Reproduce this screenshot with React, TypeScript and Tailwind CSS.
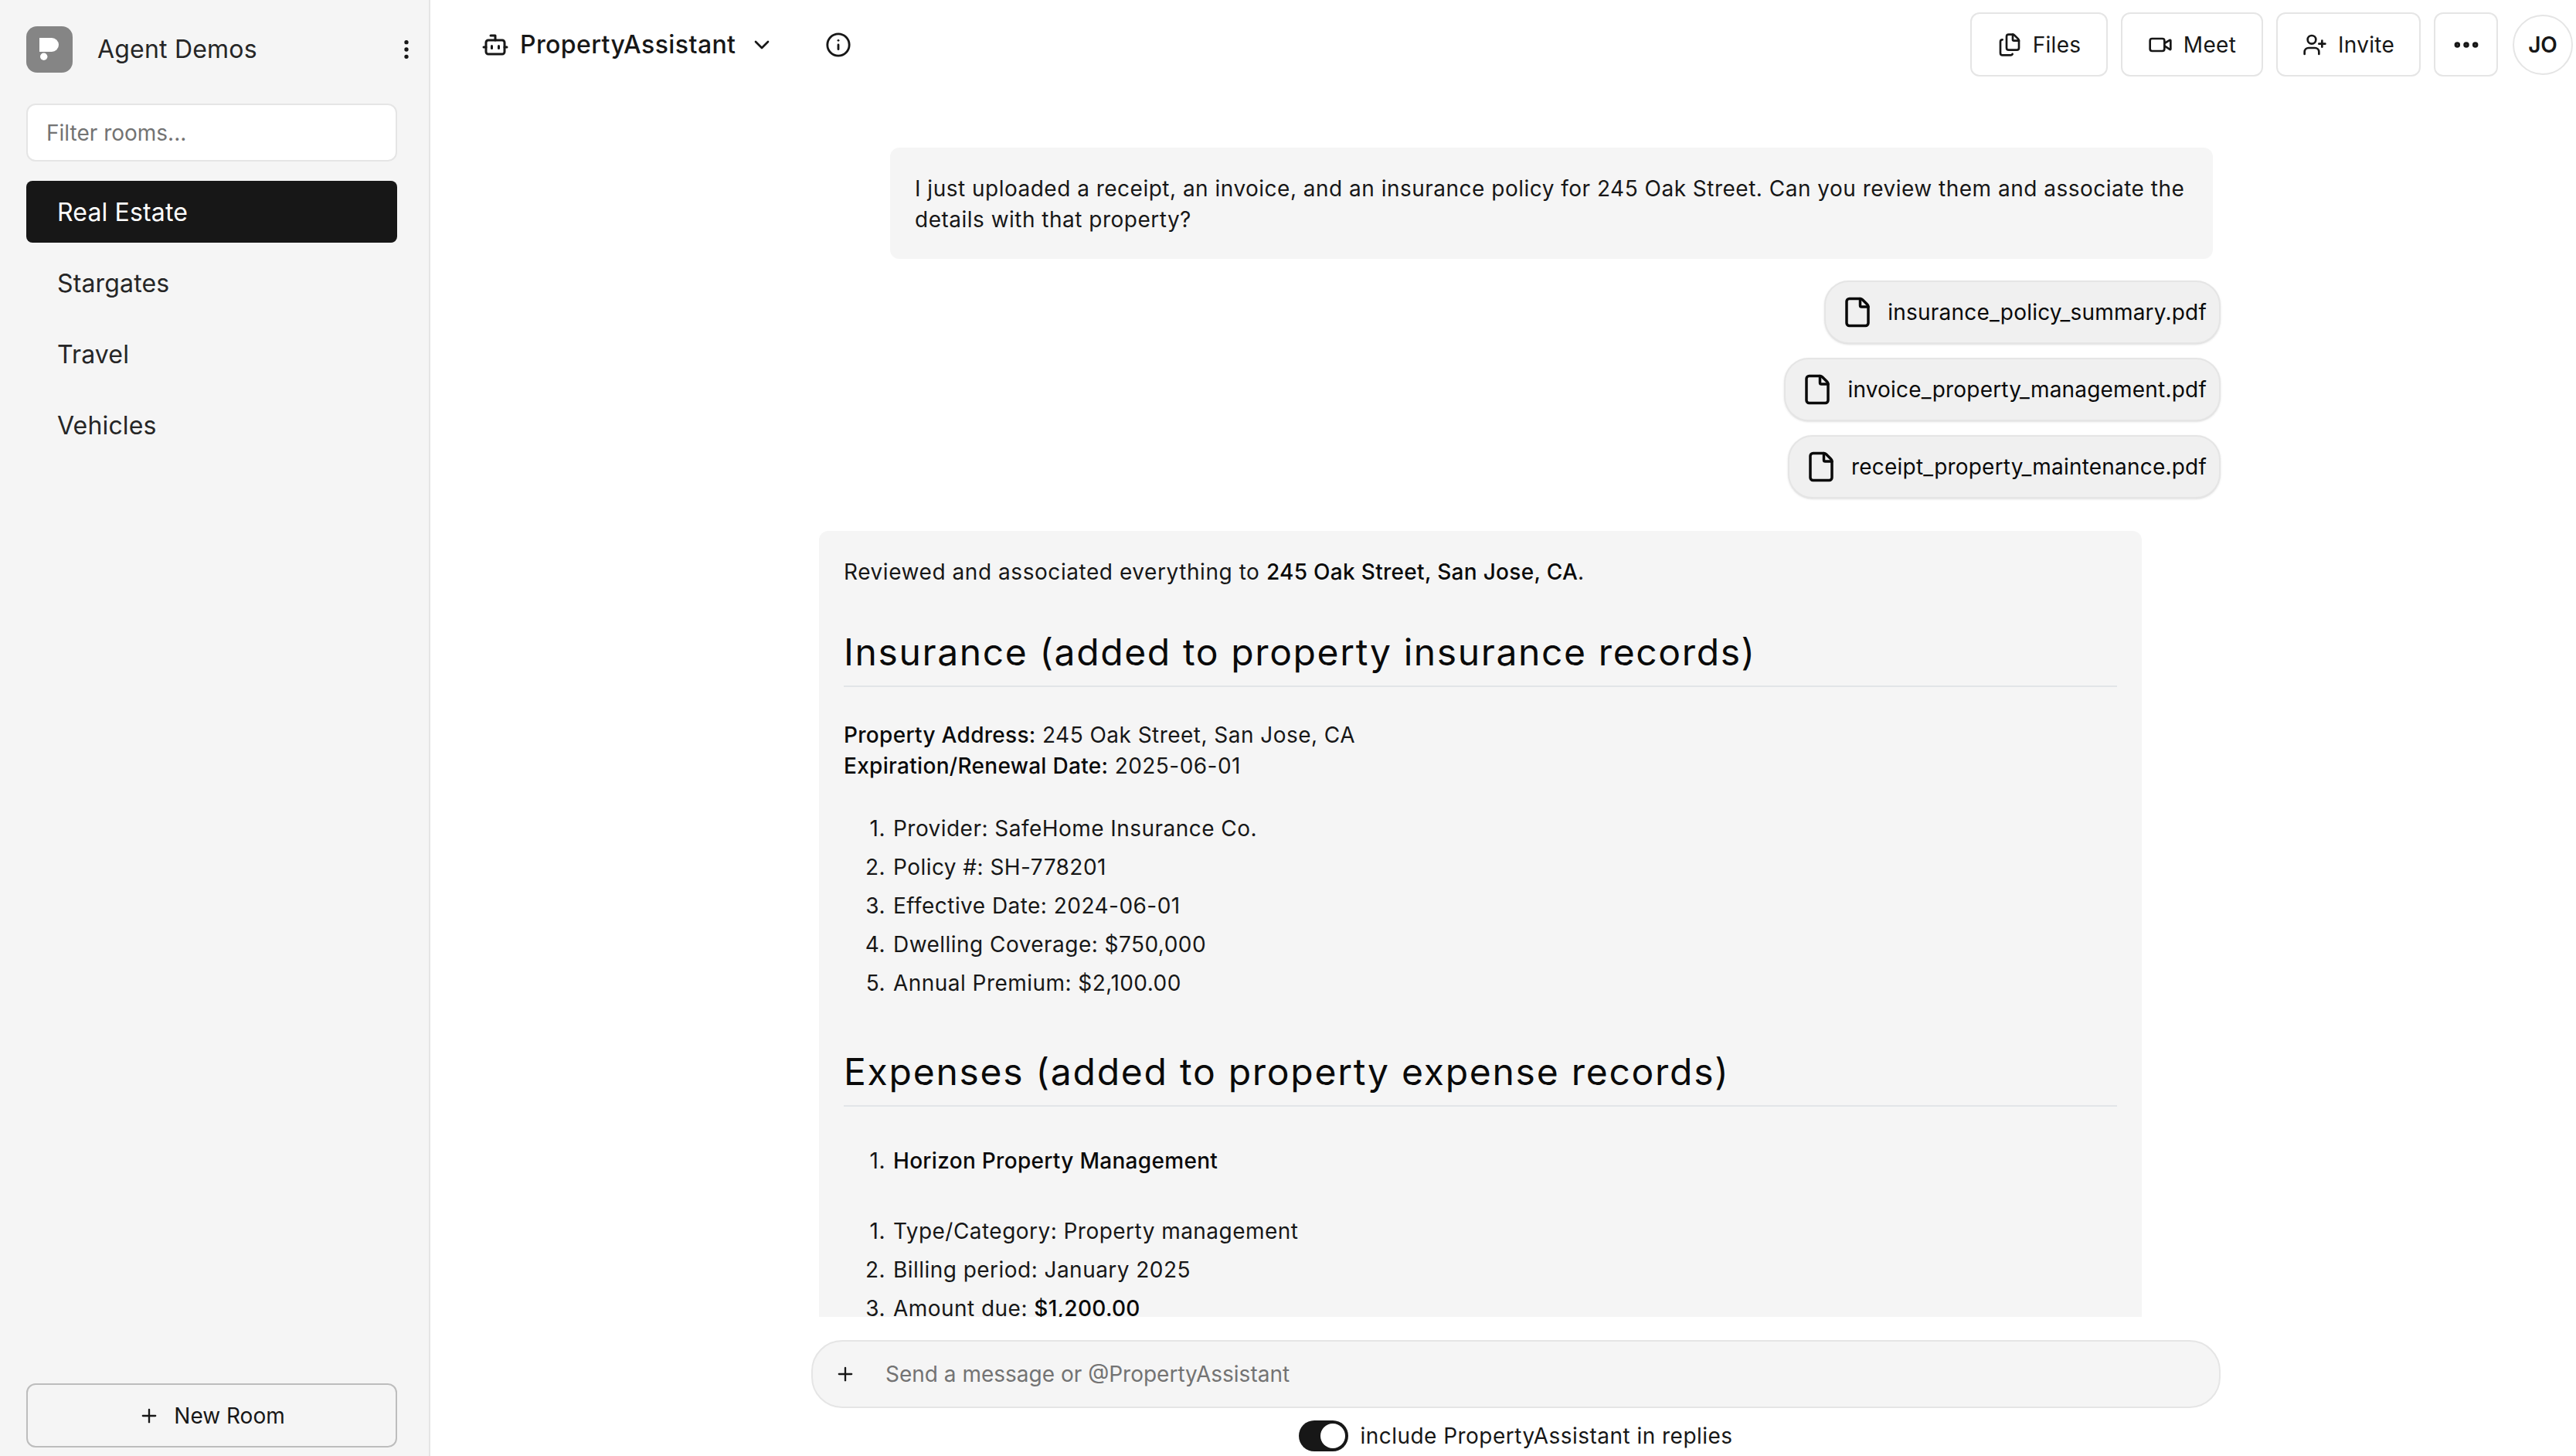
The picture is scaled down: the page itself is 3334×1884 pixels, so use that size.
import { Bot, ChevronDown, Info, Files, Video, UserPlus, Ellipsis, EllipsisVertical, File, Plus } from "lucide-react";

function Logo() {
  return (
    <svg viewBox="0 0 60 60" className="w-[60px] h-[60px] shrink-0">
      <rect width="60" height="60" rx="14" fill="#858585" />
      <path d="M17 15H33a9 9 0 0 1 0 18H17z" fill="#fff" />
      <circle cx="22.7" cy="39.3" r="4.7" fill="#fff" />
    </svg>
  );
}

function HeaderButton({ icon, label, className }: { icon: React.ReactNode; label: string; className: string }) {
  return (
    <button className={`h-[83px] flex items-center justify-center gap-[14px] border-2 border-[#e5e5e5] rounded-[12px] bg-white text-[28px] tracking-[0.3px] text-[#171717] ${className}`}>
      {icon}
      {label}
    </button>
  );
}

function Chip({ name }: { name: string }) {
  return (
    <div className="h-[82px] pl-[20px] pr-[16px] flex items-center gap-[18px] bg-[#f0f0f0] border-2 border-[#e5e5e5] rounded-[32px] shadow-sm text-[28px] tracking-[0.2px] text-[#0a0a0a]">
      <File size={42} strokeWidth={2} />
      {name}
    </div>
  );
}

function Item({ n, children }: { n: number; children: React.ReactNode }) {
  return (
    <li className="flex h-[40px] leading-[40px] mb-[10px]">
      <span className="w-[64px] shrink-0 text-right pr-[10px]">{n}.</span>
      <span>{children}</span>
    </li>
  );
}

function Heading({ children, className }: { children: React.ReactNode; className: string }) {
  return (
    <h2 className={`text-[48px] leading-[60px] font-normal text-[#0a0a0a] pb-[13px] border-b-2 border-[#e2e5e8] ${className}`}>
      {children}
    </h2>
  );
}

function B({ children }: { children: React.ReactNode }) {
  return <strong className="font-medium tracking-[0.3px] text-[#0a0a0a]">{children}</strong>;
}

export default function App() {
  return (
    <div className="flex h-screen w-full overflow-hidden bg-white text-[#171717] font-['Inter',sans-serif]">
      <aside className="w-[557px] shrink-0 flex flex-col bg-[#f5f5f5] border-r-2 border-[#e5e5e5] pl-[34px] pr-[41px] pt-[34px] pb-[11px]">
        <div className="flex items-center h-[60px]">
          <Logo />
          <span className="ml-[32px] text-[32px] tracking-[0.2px] text-[#262626] flex-1">Agent Demos</span>
          <EllipsisVertical size={32} className="mr-[-28px] text-[#171717]" />
        </div>
        <input
          placeholder="Filter rooms..."
          className="mt-[40px] h-[75px] w-full rounded-[12px] border-2 border-[#e5e5e5] bg-white px-[24px] text-[28px] placeholder:text-[#737373] outline-none"
        />
        <nav className="mt-[25px] flex flex-col gap-[12px] text-[32px] tracking-[0.15px]">
          <div className="h-[80px] flex items-center px-[40px] pt-[2px] rounded-[8px] bg-[#171717] text-white">Real Estate</div>
          <div className="h-[80px] flex items-center px-[40px] pt-[2px] text-[#262626]">Stargates</div>
          <div className="h-[80px] flex items-center px-[40px] pt-[2px] text-[#262626]">Travel</div>
          <div className="h-[80px] flex items-center px-[40px] pt-[2px] text-[#262626]">Vehicles</div>
        </nav>
        <button className="mt-auto h-[83px] flex items-center justify-center gap-[18px] rounded-[12px] border-2 border-[#bdbdbd] text-[28px] text-[#171717]">
          <Plus size={28} strokeWidth={2} />
          New Room
        </button>
      </aside>

      <main className="flex-1 min-w-0 flex flex-col">
        <header className="h-[99px] shrink-0 flex items-start pt-[16px] pl-[66px] pr-[4px]">
          <div className="h-[83px] flex items-center flex-1">
            <Bot size={36} strokeWidth={2} className="mr-[14px]" />
            <span className="text-[32px] font-medium tracking-[0.4px] text-[#171717]">PropertyAssistant</span>
            <ChevronDown size={32} strokeWidth={2} className="ml-[18px]" />
            <Info size={34} strokeWidth={2} className="ml-[66px]" />
          </div>
          <div className="flex items-center gap-[17px]">
            <HeaderButton className="w-[178px]" icon={<Files size={32} strokeWidth={2} />} label="Files" />
            <HeaderButton className="w-[184px]" icon={<Video size={32} strokeWidth={2} />} label="Meet" />
            <HeaderButton className="w-[187px]" icon={<UserPlus size={32} strokeWidth={2} />} label="Invite" />
            <button className="h-[83px] w-[83px] flex items-center justify-center border-2 border-[#e5e5e5] rounded-[12px]">
              <Ellipsis size={40} strokeWidth={2.5} />
            </button>
            <div className="ml-[2px] h-[78px] w-[78px] rounded-full border-2 border-[#e5e5e5] flex items-center justify-center text-[28px] font-semibold">JO</div>
          </div>
        </header>

        <div className="flex-1 min-h-0 overflow-hidden pl-[493px] pr-[460px] pt-[92px]">
          <div className="flex flex-col h-full">
            <div className="ml-[102px] mr-[10px] rounded-[12px] bg-[#f5f5f5] px-[32px] pt-[33px] pb-[31px] text-[28px] leading-[40px] tracking-[0.49px] text-[#171717]">
              I just uploaded a receipt, an invoice, and an insurance policy for 245 Oak Street. Can you review them and associate the details with that property?
            </div>
            <div className="mt-[28px] flex flex-col items-end gap-[18px]">
              <Chip name="insurance_policy_summary.pdf" />
              <Chip name="invoice_property_management.pdf" />
              <Chip name="receipt_property_maintenance.pdf" />
            </div>
            <div className="mt-[42px] ml-[10px] mr-[102px] flex-1 rounded-t-[12px] bg-[#f5f5f5] px-[32px] pt-[33px] text-[28px] leading-[40px] tracking-[0.46px] text-[#171717]">
              <p className="tracking-[0.56px]">
                Reviewed and associated everything to <B>245 Oak Street, San Jose, CA</B>.
              </p>
              <Heading className="mt-[54px] mb-[42px] tracking-[1.62px]">Insurance (added to property insurance records)</Heading>
              <p>
                <B>Property Address:</B> 245 Oak Street, San Jose, CA
              </p>
              <p>
                <B>Expiration/Renewal Date:</B> 2025-06-01
              </p>
              <ol className="mt-[41px]">
                <Item n={1}>Provider: SafeHome Insurance Co.</Item>
                <Item n={2}>Policy #: SH-778201</Item>
                <Item n={3}>Effective Date: 2024-06-01</Item>
                <Item n={4}>Dwelling Coverage: $750,000</Item>
                <Item n={5}>Annual Premium: $2,100.00</Item>
              </ol>
              <Heading className="mt-[65px] mb-[50px] tracking-[1.74px]">Expenses (added to property expense records)</Heading>
              <ol>
                <Item n={1}><B>Horizon Property Management</B></Item>
              </ol>
              <ol className="mt-[51px]">
                <Item n={1}>Type/Category: Property management</Item>
                <Item n={2}>Billing period: January 2025</Item>
                <Item n={3}>Amount due: <B>$1,200.00</B></Item>
              </ol>
            </div>
          </div>
        </div>

        <div className="shrink-0 pl-[493px] pr-[460px] pt-[30px]">
          <div className="h-[88px] flex items-center rounded-[40px] border-2 border-[#e5e5e5] bg-[#f5f5f5] pl-[28px] text-[28px] text-[#737373]">
            <Plus size={28} strokeWidth={2} className="text-[#171717] mr-[38px]" />
            Send a message or @PropertyAssistant
          </div>
          <div className="mt-[16px] mb-[6px] h-[40px] flex items-center justify-center gap-[15px] text-[28px] tracking-[0.47px] text-[#171717]">
            <div className="w-[64px] h-[40px] rounded-full bg-[#171717] p-[4px] flex justify-end">
              <div className="w-[32px] h-[32px] rounded-full bg-white" />
            </div>
            include PropertyAssistant in replies
          </div>
        </div>
      </main>
    </div>
  );
}
